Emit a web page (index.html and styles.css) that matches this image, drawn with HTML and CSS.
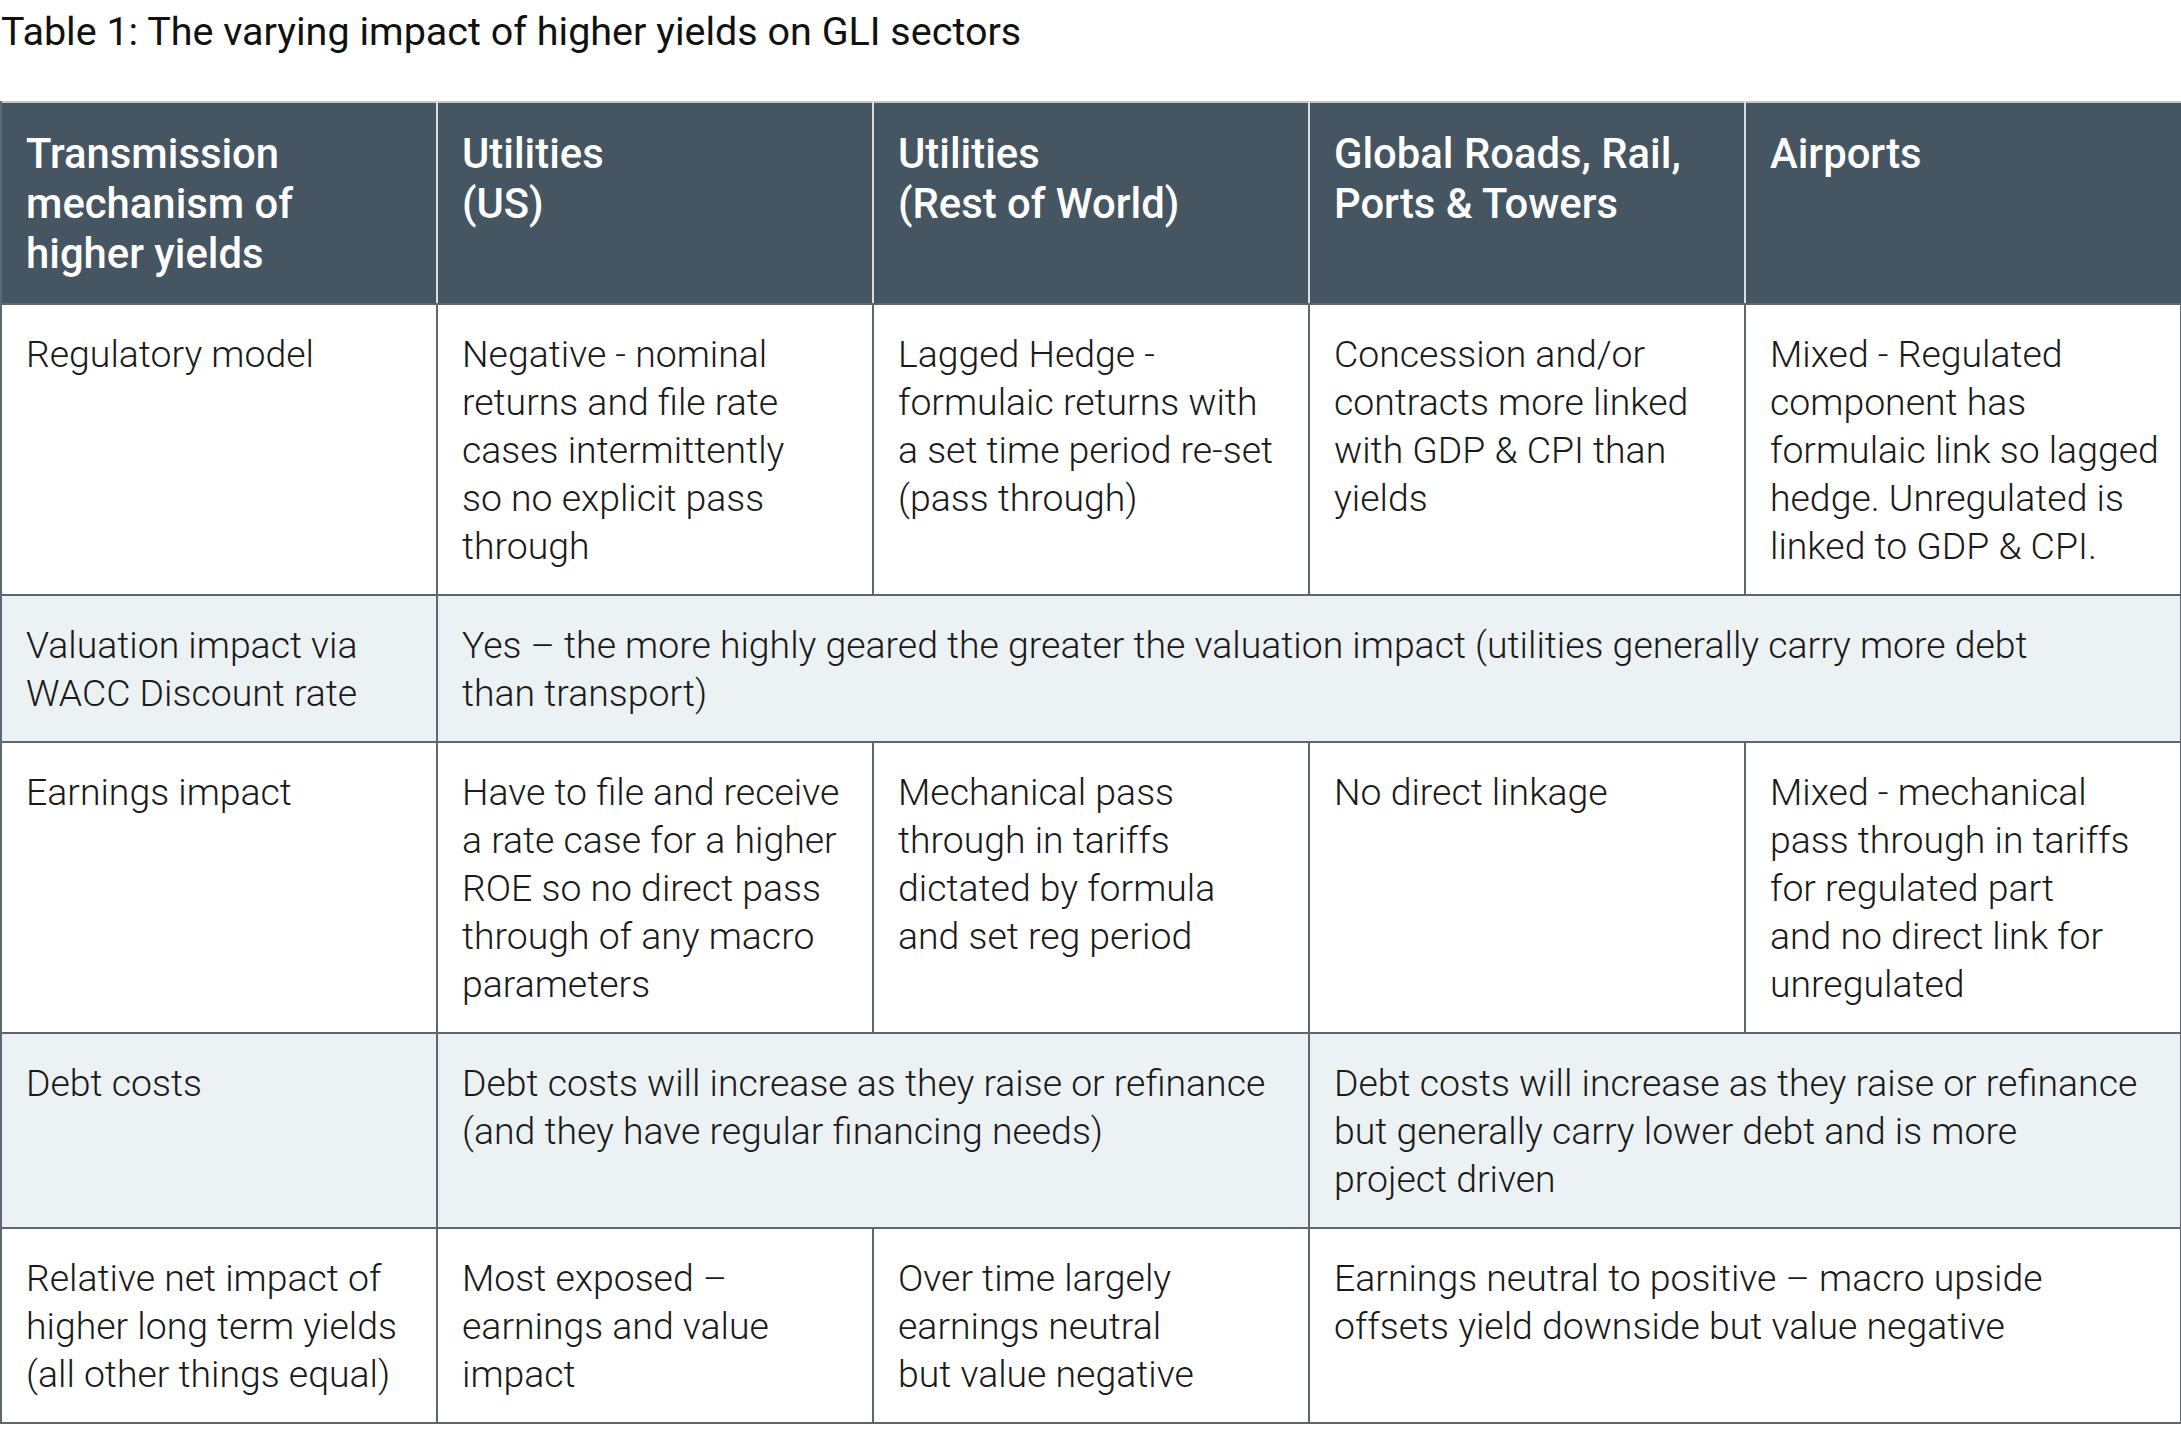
FILE: index.html
```html
<!DOCTYPE html>
<html>
<head>
<meta charset="utf-8">
<link rel="stylesheet" href="styles.css">
</head>
<body>
<div class="page">
  <h1 class="title">Table 1: The varying impact of higher yields on GLI sectors</h1>
  <table class="grid">
    <colgroup>
      <col class="c"><col class="c"><col class="c"><col class="c"><col class="c">
    </colgroup>
    <thead>
      <tr class="head">
        <th>Transmission mechanism of higher yields</th>
        <th>Utilities<br>(US)</th>
        <th>Utilities<br>(Rest of World)</th>
        <th>Global Roads, Rail, Ports &amp; Towers</th>
        <th>Airports</th>
      </tr>
    </thead>
    <tbody>
      <tr class="white">
        <td>Regulatory model</td>
        <td>Negative - nominal returns and file rate cases intermittently<br>so no explicit pass through</td>
        <td>Lagged Hedge - formulaic returns with<br>a set time period re-set (pass through)</td>
        <td>Concession and/or contracts more linked with GDP &amp; CPI than yields</td>
        <td>Mixed - Regulated component has formulaic link so lagged hedge. Unregulated is linked to GDP &amp; CPI.</td>
      </tr>
      <tr class="tint">
        <td>Valuation impact via WACC Discount rate</td>
        <td colspan="4">Yes – the more highly geared the greater the valuation impact (utilities generally carry more debt<br>than transport)</td>
      </tr>
      <tr class="white">
        <td>Earnings impact</td>
        <td>Have to file and receive a rate case for a higher ROE so no direct pass through of any macro parameters</td>
        <td>Mechanical pass through in tariffs dictated by formula<br>and set reg period</td>
        <td>No direct linkage</td>
        <td>Mixed - mechanical<br>pass through in tariffs for regulated part<br>and no direct link for unregulated</td>
      </tr>
      <tr class="tint">
        <td>Debt costs</td>
        <td colspan="2">Debt costs will increase as they raise or refinance (and they have regular financing needs)</td>
        <td colspan="2">Debt costs will increase as they raise or refinance but generally carry lower debt and is more<br>project driven</td>
      </tr>
      <tr class="white">
        <td>Relative net impact of higher long term yields (all other things equal)</td>
        <td>Most exposed – earnings and value impact</td>
        <td>Over time largely earnings neutral<br>but value negative</td>
        <td colspan="2">Earnings neutral to positive – macro upside offsets yield downside but value negative</td>
      </tr>
    </tbody>
  </table>
</div>
</body>
</html>
```

FILE: styles.css
```css
html, body {
  margin: 0;
  padding: 0;
  background: #ffffff;
}

.page {
  width: 2181px;
  font-family: Roboto, "Liberation Sans", sans-serif;
  color: #1a1a1a;
}

.title {
  margin: 0;
  padding: 9px 0 0 1px;
  height: 101px;
  box-sizing: border-box;
  font-size: 39.5px;
  font-weight: 400;
  line-height: 46px;
  color: #111111;
}

.grid {
  width: 2181px;
  border-collapse: collapse;
  table-layout: fixed;
  border-top: 2px solid #c3c8cc;
}

.c {
  width: 436px;
}

.grid th,
.grid td {
  text-align: left;
  vertical-align: top;
  padding: 25px 18px 24px 24px;
}

.head th {
  background: #465562;
  color: #ffffff;
  font-size: 41.8px;
  font-weight: 500;
  line-height: 50px;
  border-left: 2px solid #d9dde0;
  border-right: 2px solid #d9dde0;
  border-bottom: 2px solid #5b6771;
  padding-top: 26px;
}

.head th:first-child {
  border-left: 2px solid #5b6771;
}

.head th:last-child {
  border-right: none;
}

.grid td {
  font-size: 37.4px;
  font-weight: 300;
  line-height: 48px;
  border: 2px solid #5b6771;
}

.grid td:last-child {
  border-right: 2px solid #5b6771;
}

.tint td {
  background: #ecf1f4;
}

.white td {
  background: #ffffff;
}
```
